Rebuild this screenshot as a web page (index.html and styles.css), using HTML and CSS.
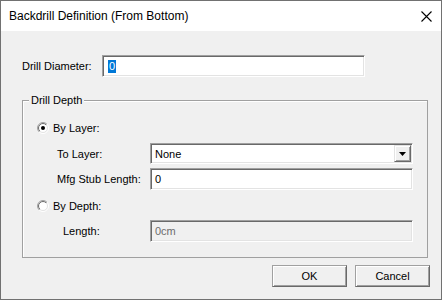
FILE: index.html
```html
<!DOCTYPE html>
<html>
<head>
<meta charset="utf-8">
<link rel="stylesheet" href="styles.css">
</head>
<body>
<div class="window">
  <div class="titlebar">
    <span class="title">Backdrill Definition (From Bottom)</span>
    <svg class="close" width="11" height="11" viewBox="0 0 11 11"><path d="M0.5 0.5 L10.5 10.5 M10.5 0.5 L0.5 10.5" stroke="#000" stroke-width="1.1" fill="none"/></svg>
  </div>
  <div class="content">
    <div class="diam-row">
      <span class="diam-label">Drill Diameter:</span>
      <div class="edit diam-edit"><span class="sel">0</span></div>
    </div>
    <div class="group">
      <span class="group-title">Drill Depth</span>
      <div class="radio-row first">
        <svg class="radio" width="12" height="12" viewBox="0 0 12 12">
          <defs>
            <linearGradient id="o1" x1="0" y1="0" x2="1" y2="1"><stop offset="0.5" stop-color="#a0a0a0"/><stop offset="0.5" stop-color="#ffffff"/></linearGradient>
            <linearGradient id="i1" x1="0" y1="0" x2="1" y2="1"><stop offset="0.5" stop-color="#696969"/><stop offset="0.5" stop-color="#e3e3e3"/></linearGradient>
          </defs>
          <circle cx="6" cy="6" r="5.5" fill="none" stroke="url(#o1)" stroke-width="1"/>
          <circle cx="6" cy="6" r="4.5" fill="#fff" stroke="url(#i1)" stroke-width="1"/>
          <circle cx="6" cy="6" r="2" fill="#000"/>
        </svg>
        <span>By Layer:</span>
      </div>
      <div class="field-row to-layer">
        <span class="field-label">To Layer:</span>
        <div class="combo"><span class="combo-text">None</span><span class="drop"><svg width="7" height="4" viewBox="0 0 7 4"><path d="M0 0 H7 L3.5 4 Z" fill="#000"/></svg></span></div>
      </div>
      <div class="field-row stub">
        <span class="field-label">Mfg Stub Length:</span>
        <div class="edit field-edit">0</div>
      </div>
      <div class="radio-row second">
        <svg class="radio" width="12" height="12" viewBox="0 0 12 12">
          <defs>
            <linearGradient id="o2" x1="0" y1="0" x2="1" y2="1"><stop offset="0.5" stop-color="#a0a0a0"/><stop offset="0.5" stop-color="#ffffff"/></linearGradient>
            <linearGradient id="i2" x1="0" y1="0" x2="1" y2="1"><stop offset="0.5" stop-color="#696969"/><stop offset="0.5" stop-color="#e3e3e3"/></linearGradient>
          </defs>
          <circle cx="6" cy="6" r="5.5" fill="none" stroke="url(#o2)" stroke-width="1"/>
          <circle cx="6" cy="6" r="4.5" fill="#fff" stroke="url(#i2)" stroke-width="1"/>
        </svg>
        <span>By Depth:</span>
      </div>
      <div class="field-row length">
        <span class="field-label length-label">Length:</span>
        <div class="edit field-edit disabled">0cm</div>
      </div>
    </div>
    <div class="buttons">
      <div class="btn default">OK</div>
      <div class="btn">Cancel</div>
    </div>
  </div>
</div>
</body>
</html>
```

FILE: styles.css
```css
html, body {
  margin: 0;
  padding: 0;
  background: #f0f0f0;
}

.window {
  width: 442px;
  height: 300px;
  box-sizing: border-box;
  border: 1px solid #717171;
  background: #f0f0f0;
  display: flex;
  flex-direction: column;
  font-family: "Liberation Sans", Arial, sans-serif;
  font-size: 11px;
  color: #000;
}

.titlebar {
  height: 30px;
  flex: none;
  background: #fff;
  display: flex;
  align-items: center;
  justify-content: space-between;
  padding: 0 9px 0 8px;
}

.title {
  font-size: 12px;
  color: #000;
}

.close {
  display: block;
  margin-top: 1px;
}

.content {
  padding-left: 21px;
  display: flex;
  flex-direction: column;
}

.diam-row {
  margin-top: 24px;
  height: 22px;
  display: flex;
  align-items: center;
}

.diam-label {
  width: 80px;
  flex: none;
}

.edit {
  height: 22px;
  box-sizing: border-box;
  background: #fff;
  border: 1px solid;
  border-color: #a0a0a0 #ffffff #ffffff #a0a0a0;
  box-shadow: inset 1px 1px 0 #696969, inset -1px -1px 0 #e3e3e3;
  display: flex;
  align-items: center;
  padding-left: 4px;
}

.diam-edit {
  width: 263px;
}

.sel {
  background: #0078d7;
  color: #fff;
  height: 13px;
  line-height: 13px;
  padding: 0 1px;
  margin-left: 1px;
}

.group {
  position: relative;
  margin-top: 23px;
  width: 406px;
  height: 158px;
  box-sizing: border-box;
  border: 1px solid #a0a0a0;
  box-shadow: inset 1px 1px 0 #fff;
  display: flex;
  flex-direction: column;
}

.group-title {
  position: absolute;
  top: -7px;
  left: 6px;
  padding: 0 2px;
  background: #f0f0f0;
  line-height: 13px;
}

.radio-row {
  height: 14px;
  display: flex;
  align-items: center;
  padding-left: 14px;
  gap: 4px;
}

.radio-row.first {
  margin-top: 20px;
}

.radio-row.second {
  margin-top: 9px;
}

.radio {
  display: block;
  flex: none;
}

.field-row {
  display: flex;
  align-items: center;
  padding-left: 34px;
}

.field-label {
  width: 93px;
  flex: none;
}

.length-label {
  margin-left: 6px;
  width: 87px;
}

.to-layer {
  margin-top: 8px;
  height: 21px;
}

.stub {
  margin-top: 4px;
  height: 22px;
}

.length {
  margin-top: 7px;
  height: 22px;
}

.field-edit {
  width: 263px;
}

.disabled {
  background: #f0f0f0;
  color: #6d6d6d;
}

.combo {
  width: 263px;
  height: 21px;
  box-sizing: border-box;
  background: #fff;
  border: 1px solid;
  border-color: #a0a0a0 #ffffff #ffffff #a0a0a0;
  box-shadow: inset 1px 1px 0 #696969, inset -1px -1px 0 #e3e3e3;
  display: flex;
  align-items: center;
  padding: 1px 1px 1px 4px;
}

.combo-text {
  flex: 1;
}

.drop {
  width: 17px;
  height: 17px;
  box-sizing: border-box;
  background: #f0f0f0;
  border: 1px solid;
  border-color: #e3e3e3 #696969 #696969 #e3e3e3;
  box-shadow: inset 1px 1px 0 #fff, inset -1px -1px 0 #a0a0a0;
  display: flex;
  align-items: center;
  justify-content: center;
}

.drop svg {
  display: block;
  margin-top: 1px;
}

.buttons {
  margin-top: 7px;
  width: 408px;
  display: flex;
  justify-content: flex-end;
  gap: 8px;
}

.btn {
  width: 75px;
  height: 22px;
  box-sizing: border-box;
  background: #f0f0f0;
  border: 1px solid;
  border-color: #a0a0a0 #696969 #696969 #a0a0a0;
  box-shadow: inset 1px 1px 0 #fff, inset -1px -1px 0 #a0a0a0;
  display: flex;
  align-items: center;
  justify-content: center;
}
```
